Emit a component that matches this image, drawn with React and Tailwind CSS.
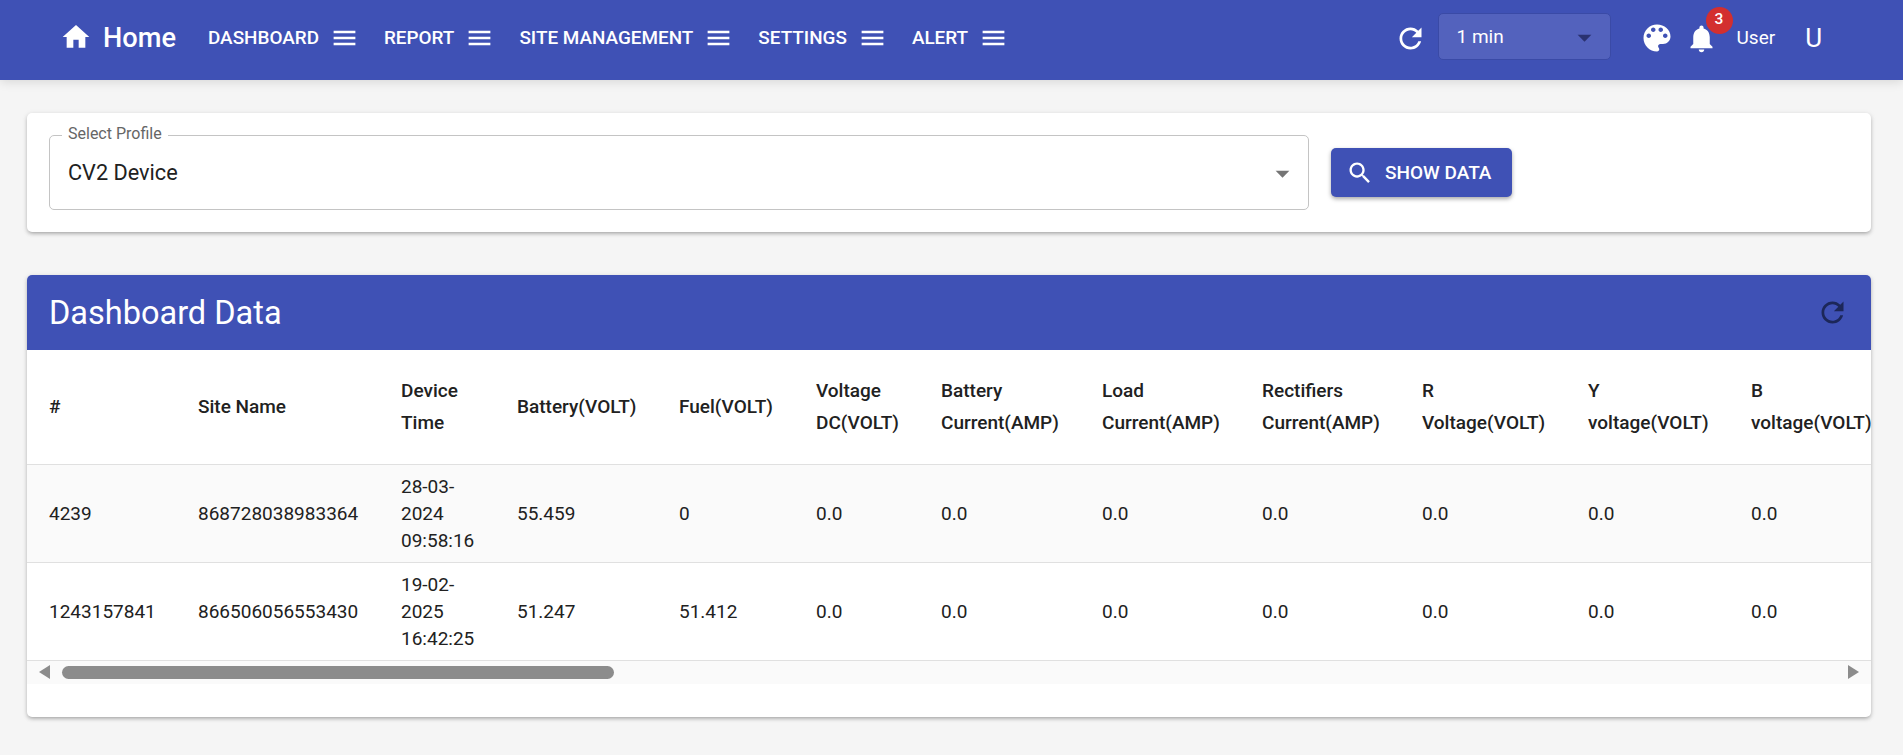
const P = {
  home: "M10 20v-6h4v6h5v-8h3L12 3 2 12h3v8z",
  menu: "M3 18h18v-2H3v2zm0-5h18v-2H3v2zm0-7v2h18V6H3z",
  refresh: "M17.65 6.35C16.2 4.9 14.21 4 12 4c-4.42 0-7.99 3.58-7.99 8s3.57 8 7.99 8c3.73 0 6.84-2.55 7.73-6h-2.08c-.82 2.33-3.04 4-5.65 4-3.31 0-6-2.69-6-6s2.69-6 6-6c1.66 0 3.14.69 4.22 1.78L13 11h7V4l-2.35 2.35z",
  palette: "M12 3c-4.97 0-9 4.03-9 9s4.03 9 9 9c.83 0 1.5-.67 1.5-1.5 0-.39-.15-.74-.39-1.01-.23-.26-.38-.61-.38-.99 0-.83.67-1.5 1.5-1.5H16c2.76 0 5-2.24 5-5 0-4.42-4.03-8-9-8zm-5.5 9c-.83 0-1.5-.67-1.5-1.5S5.67 9 6.5 9 8 9.67 8 10.5 7.33 12 6.5 12zm3-4C8.67 8 8 7.33 8 6.5S8.67 5 9.5 5s1.5.67 1.5 1.5S10.33 8 9.5 8zm5 0c-.83 0-1.5-.67-1.5-1.5S13.67 5 14.5 5s1.5.67 1.5 1.5S15.33 8 14.5 8zm3 4c-.83 0-1.5-.67-1.5-1.5S16.67 9 17.5 9s1.5.67 1.5 1.5-.67 1.5-1.5 1.5z",
  bell: "M12 22c1.1 0 2-.9 2-2h-4c0 1.1.89 2 2 2zm6-6v-5c0-3.07-1.64-5.64-4.5-6.32V4c0-.83-.67-1.5-1.5-1.5s-1.5.67-1.5 1.5v.68C7.63 5.36 6 7.92 6 11v5l-2 2v1h16v-1l-2-2z",
  search: "M15.5 14h-.79l-.28-.27C15.41 12.59 16 11.11 16 9.5 16 5.91 13.09 3 9.5 3S3 5.91 3 9.5 5.91 16 9.5 16c1.61 0 3.09-.59 4.23-1.57l.27.28v.79l5 4.99L20.49 19l-4.99-5zm-6 0C7.01 14 5 11.99 5 9.5S7.01 5 9.5 5 14 7.01 14 9.5 11.99 14 9.5 14z",
  drop: "M7 10l5 5 5-5z",
};

function Icon({ d, className }) {
  return (
    <svg viewBox="0 0 24 24" fill="currentColor" className={className}>
      <path d={d} />
    </svg>
  );
}

function NavItem({ label, className }) {
  return (
    <div className={"flex items-center text-[18.9px] font-medium text-white " + className}>
      <span>{label}</span>
      <Icon d={P.menu} className="w-[29px] h-[30px] ml-[11px]" />
    </div>
  );
}

const cols = [
  ["#", "w-[149px]"],
  ["Site Name", "w-[203px]"],
  ["Device Time", "w-[116px]"],
  ["Battery(VOLT)", "w-[162px]"],
  ["Fuel(VOLT)", "w-[137px]"],
  ["Voltage DC(VOLT)", "w-[125px]"],
  ["Battery Current(AMP)", "w-[161px]"],
  ["Load Current(AMP)", "w-[160px]"],
  ["Rectifiers Current(AMP)", "w-[160px]"],
  ["R Voltage(VOLT)", "w-[166px]"],
  ["Y voltage(VOLT)", "w-[163px]"],
  ["B voltage(VOLT)", "w-[165px]"],
];

const rows = [
  ["4239", "868728038983364", "28-03-2024 09:58:16", "55.459", "0", "0.0", "0.0", "0.0", "0.0", "0.0", "0.0", "0.0"],
  ["1243157841", "866506056553430", "19-02-2025 16:42:25", "51.247", "51.412", "0.0", "0.0", "0.0", "0.0", "0.0", "0.0", "0.0"],
];

export default function App() {
  return (
    <div className="h-[755px] overflow-hidden bg-[#f5f5f5] font-['Roboto',sans-serif] text-[#212121]">
      <header className="h-[80px] bg-[#3f51b5] text-white flex items-center pl-[60px] pr-[81px] shadow-[0_2px_10px_rgba(0,0,0,0.12)] pb-[4px]">
        <Icon d={P.home} className="w-[32px] h-[32px] mb-[2px]" />
        <span className="ml-[11px] pt-[2px] text-[27.2px] font-medium leading-none">Home</span>
        <div className="flex items-center ml-[32px]">
          <NavItem label="DASHBOARD" className="mr-[25px]" />
          <NavItem label="REPORT" className="mr-[25px]" />
          <NavItem label="SITE MANAGEMENT" className="mr-[25px]" />
          <NavItem label="SETTINGS" className="mr-[25px]" />
          <NavItem label="ALERT" />
        </div>
        <div className="ml-auto flex items-center">
          <Icon d={P.refresh} className="w-[33px] h-[33px]" />
          <div className="ml-[11px] mb-[3px] w-[173px] h-[47px] rounded-[5px] bg-[#5362bd] border border-[#3a4aa6] flex items-center justify-between pt-[2px] pl-[18px] pr-[9px] text-[19px]">
            <span>1 min</span>
            <Icon d={P.drop} className="w-[33px] h-[33px] text-[#2a3270]" />
          </div>
          <Icon d={P.palette} className="ml-[28px] w-[36px] h-[36px]" />
          <div className="relative ml-[10px] w-[33px] h-[33px]">
            <Icon d={P.bell} className="w-[33px] h-[33px]" />
            <span className="absolute left-[21px] top-[-15px] w-[27px] h-[27px] rounded-full bg-[#d32f2f] flex items-center justify-center text-[15.5px] font-medium">3</span>
          </div>
          <span className="ml-[19px] text-[19px]">User</span>
          <span className="ml-[30px] text-[26px] leading-none">U</span>
        </div>
      </header>

      <main className="pl-[27px] pr-[32px] pt-[33px]">
        <section className="h-[119px] bg-white rounded-[5px] shadow-[0_2px_4px_-1px_rgba(0,0,0,0.35),0_1px_6px_rgba(0,0,0,0.08)] flex items-start pl-[22px] pt-[22px]">
          <div className="relative w-[1260px] h-[75px] border border-[#c4c4c4] rounded-[5px] flex items-center justify-between pt-[2px] pl-[18px] pr-[18px]">
            <span className="absolute left-[12px] top-[-11px] bg-white px-[6px] text-[16px] leading-[18px] text-[#666666]">Select Profile</span>
            <span className="text-[21.7px]">CV2 Device</span>
            <Icon d={P.drop} className="w-[33px] h-[33px] text-[#757575] -mr-[9px]" />
          </div>
          <button className="ml-[22px] mt-[13px] w-[181px] h-[49px] rounded-[5px] bg-[#3f51b5] text-white flex items-center pl-[15px] pt-[1px] text-[19px] font-medium shadow-[0_2px_4px_rgba(0,0,0,0.35)]">
            <Icon d={P.search} className="w-[28px] h-[28px]" />
            <span className="ml-[11px]">SHOW DATA</span>
          </button>
        </section>

        <section className="mt-[43px] h-[442px] bg-white rounded-[5px] overflow-hidden shadow-[0_2px_4px_-1px_rgba(0,0,0,0.35),0_1px_6px_rgba(0,0,0,0.08)]">
          <div className="h-[75px] bg-[#3f51b5] flex items-center justify-between pl-[22px] pr-[22px]">
            <h2 className="text-[32.5px] text-white font-normal pt-[1px]">Dashboard Data</h2>
            <Icon d={P.refresh} className="w-[33px] h-[33px] text-[#1c2759]" />
          </div>
          <div className="overflow-hidden">
            <table className="table-fixed border-collapse w-[1867px]">
              <thead>
                <tr className="border-b border-[#e0e0e0]">
                  {cols.map(([label, w]) => (
                    <th key={label} className={"h-[114px] pl-[22px] pr-[8px] text-left align-middle text-[19px] font-medium leading-[32px] " + w}>
                      {label}
                    </th>
                  ))}
                </tr>
              </thead>
              <tbody>
                {rows.map((row, i) => (
                  <tr key={i} className={"border-b border-[#e0e0e0] " + (i === 0 ? "bg-[#fafafa]" : "bg-white")}>
                    {row.map((c, j) => (
                      <td key={j} className="h-[98px] pl-[22px] pr-[8px] align-middle text-[19px] leading-[27px]">
                        {c}
                      </td>
                    ))}
                  </tr>
                ))}
              </tbody>
            </table>
          </div>
          <div className="h-[23px] bg-[#fafafa] flex items-center pl-[12px] pr-[12px]">
            <span className="w-0 h-0 border-y-[7px] border-y-transparent border-r-[11px] border-r-[#8c8c8c]" />
            <div className="ml-[12px] w-[552px] h-[13px] rounded-[7px] bg-[#8c8c8c]" />
            <span className="ml-auto w-0 h-0 border-y-[7px] border-y-transparent border-l-[11px] border-l-[#8c8c8c]" />
          </div>
        </section>
      </main>
    </div>
  );
}
